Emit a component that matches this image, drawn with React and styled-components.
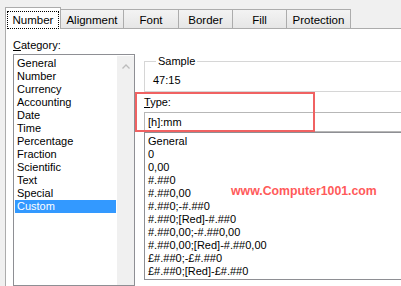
import styled, { createGlobalStyle } from 'styled-components'

const GlobalStyle = createGlobalStyle`
  html, body {
    margin: 0;
    padding: 0;
    background: #f0f0f0;
  }
  body {
    font-family: "Liberation Sans", Arial, sans-serif;
    font-size: 11px;
    color: #000;
  }
`

const tabs = [
  { label: 'Number', width: 56 },
  { label: 'Alignment', width: 64 },
  { label: 'Font', width: 56 },
  { label: 'Border', width: 55 },
  { label: 'Fill', width: 55 },
  { label: 'Protection', width: 65 },
]

const categories = [
  'General', 'Number', 'Currency', 'Accounting', 'Date', 'Time',
  'Percentage', 'Fraction', 'Scientific', 'Text', 'Special', 'Custom',
]

const formats = [
  'General',
  '0',
  '0,00',
  '#.##0',
  '#.##0,00',
  '#.##0;-#.##0',
  '#.##0;[Red]-#.##0',
  '#.##0,00;-#.##0,00',
  '#.##0,00;[Red]-#.##0,00',
  '£#.##0;-£#.##0',
  '£#.##0;[Red]-£#.##0',
]

function App() {
  return (
    <Dialog>
      <GlobalStyle />
      <TabStrip>
        {tabs.map((t, i) => (
          <Tab key={t.label} $active={i === 0} $width={t.width}>
            {i === 0 ? <FocusRect>{t.label}</FocusRect> : t.label}
          </Tab>
        ))}
      </TabStrip>

      <Panel>
        <LeftColumn>
          <FieldLabel><u>C</u>ategory:</FieldLabel>
          <CategoryList>
            <CategoryItems>
              {categories.map(c => (
                <CategoryItem key={c} $selected={c === 'Custom'}>{c}</CategoryItem>
              ))}
            </CategoryItems>
            <ScrollTrack>
              <svg width="8" height="5" viewBox="0 0 8 5">
                <polyline points="0.5,4.5 4,1 7.5,4.5" fill="none" stroke="#bcbcbc" strokeWidth="1.3" />
              </svg>
            </ScrollTrack>
          </CategoryList>
        </LeftColumn>

        <RightColumn>
          <SampleGroup>
            <SampleLegend>Sample</SampleLegend>
            <SampleValue>47:15</SampleValue>
          </SampleGroup>

          <TypeLabel><u>T</u>ype:</TypeLabel>
          <TypeInput>[h]:mm</TypeInput>
          <FormatList>
            {formats.map(f => (
              <FormatItem key={f}>{f}</FormatItem>
            ))}
            <Watermark>www.Computer1001.com</Watermark>
          </FormatList>

          <Highlight />
        </RightColumn>
      </Panel>
    </Dialog>
  )
}

const Dialog = styled.div`
  width: 401px;
  height: 286px;
  overflow: hidden;
  background: #f0f0f0;
  display: flex;
  flex-direction: column;
`

const TabStrip = styled.div`
  display: flex;
  align-items: flex-end;
  height: 28px;
  padding-left: 5px;
  flex-shrink: 0;
`

const Tab = styled.div`
  box-sizing: border-box;
  width: ${p => p.$width}px;
  height: ${p => (p.$active ? 22 : 19)}px;
  margin-left: ${p => (p.$active ? 0 : -1)}px;
  margin-bottom: ${p => (p.$active ? -1 : 0)}px;
  border: 1px solid #acacac;
  border-bottom: none;
  background: ${p => (p.$active ? '#fff' : 'linear-gradient(#f3f3f3, #e6e6e6)')};
  display: flex;
  align-items: center;
  justify-content: center;
  padding-top: ${p => (p.$active ? 2 : 1)}px;
  position: relative;
  z-index: ${p => (p.$active ? 2 : 1)};
  white-space: nowrap;
  font-size: 11.5px;
`

const FocusRect = styled.span`
  box-sizing: border-box;
  width: 50px;
  height: 16px;
  outline: 1px dotted #000;
  display: flex;
  align-items: center;
  justify-content: center;
  margin-top: 1px;
`

const Panel = styled.div`
  flex: 1;
  margin-left: 5px;
  background: #fff;
  border-top: 1px solid #acacac;
  border-left: 1px solid #acacac;
  display: flex;
  gap: 9px;
  padding: 10px 0 0 7px;
  overflow: hidden;
`

const LeftColumn = styled.div`
  display: flex;
  flex-direction: column;
  width: 122px;
  flex-shrink: 0;
`

const FieldLabel = styled.div`
  line-height: 13px;
  height: 13px;
  margin-bottom: 2px;
  white-space: nowrap;
`

const CategoryList = styled.div`
  box-sizing: border-box;
  height: 240px;
  border: 1px solid #8e8f94;
  padding: 1px 0 0 1px;
  display: flex;
`

const CategoryItems = styled.div`
  flex: 1;
  padding-top: 1px;
  padding-right: 1px;
`

const CategoryItem = styled.div`
  height: 13px;
  line-height: 13px;
  padding-left: 2px;
  white-space: nowrap;
  background: ${p => (p.$selected ? '#3399ff' : 'transparent')};
  color: ${p => (p.$selected ? '#fff' : '#000')};
`

const ScrollTrack = styled.div`
  width: 17px;
  background: #f0f0f0;
  display: flex;
  justify-content: center;
  padding-top: 8px;
  box-sizing: border-box;
`

const RightColumn = styled.div`
  position: relative;
  width: 300px;
  flex-shrink: 0;
  display: flex;
  flex-direction: column;
  padding-top: 16px;
`

const SampleGroup = styled.fieldset`
  margin: 0;
  padding: 6px 0 4px 8px;
  border: 1px solid #d6d6d6;
  border-right: none;
  min-width: 0;
`

const SampleLegend = styled.legend`
  margin-left: 3px;
  padding: 0 2px;
  line-height: 13px;
`

const SampleValue = styled.div`
  line-height: 13px;
`

const TypeLabel = styled.div`
  line-height: 13px;
  margin-top: 4px;
`

const TypeInput = styled.div`
  box-sizing: border-box;
  height: 20px;
  margin-top: 3px;
  border: 1px solid #b7b7b7;
  border-right: none;
  padding-left: 3px;
  display: flex;
  align-items: center;
  white-space: nowrap;
`

const FormatList = styled.div`
  position: relative;
  box-sizing: border-box;
  height: 148px;
  border: 1px solid #8e8f94;
  border-right: none;
  padding: 2px 0 0 3px;
`

const FormatItem = styled.div`
  height: 13px;
  line-height: 13px;
  white-space: nowrap;
`

const Watermark = styled.div`
  position: absolute;
  left: 86px;
  top: 51px;
  font-weight: bold;
  font-size: 12.3px;
  line-height: 14px;
  color: #ff5a5a;
  white-space: nowrap;
`

const Highlight = styled.div`
  position: absolute;
  left: -9px;
  top: 53px;
  width: 180px;
  height: 40px;
  box-sizing: border-box;
  border: 2px solid #f06262;
  pointer-events: none;
`

export default App
